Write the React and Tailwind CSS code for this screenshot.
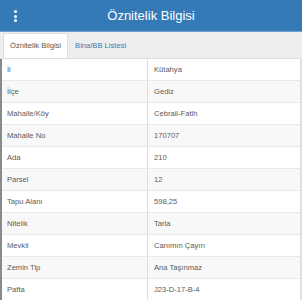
import React from 'react';

const ROWS = [
  ['İl', 'Kütahya'],
  ['İlçe', 'Gediz'],
  ['Mahalle/Köy', 'Cebrail-Fatih'],
  ['Mahalle No', '170707'],
  ['Ada', '210'],
  ['Parsel', '12'],
  ['Tapu Alanı', '598,25'],
  ['Nitelik', 'Tarla'],
  ['Mevkii', 'Canımın Çayırı'],
  ['Zemin Tip', 'Ana Taşınmaz'],
  ['Pafta', 'J23-D-17-B-4'],
];

export default function App() {
  return (
    <div className="w-[302px] h-[300px] overflow-hidden bg-white font-['Liberation_Sans',Arial,sans-serif]">
      {/* Header */}
      <div className="relative h-[32px] bg-[#337ab7] border-b border-[#6a9fd0] flex items-center justify-center">
        <div className="absolute left-[14px] top-[10px] flex flex-col gap-[1.5px]">
          <span className="w-[3px] h-[3px] rounded-full bg-white" />
          <span className="w-[3px] h-[3px] rounded-full bg-white" />
          <span className="w-[3px] h-[3px] rounded-full bg-white" />
        </div>
        <span className="text-white text-[13px] leading-none">Öznitelik Bilgisi</span>
      </div>

      {/* Tabs */}
      <div className="h-[27px] bg-[#eeeeee] border-b border-[#dddddd] flex items-end pl-[3px]">
        <div className="h-[25px] px-[6px] bg-white border border-b-0 border-[#dddddd] rounded-t-[2px] flex items-center text-[7.6px] text-[#555555]">
          Öznitelik Bilgisi
        </div>
        <div className="h-[25px] px-[7px] flex items-center text-[7.6px] text-[#337ab7]">
          Bina/BB Listesi
        </div>
      </div>

      {/* Table */}
      <div className="border-l-2 border-r-2 border-l-[#8a8a8a] border-r-[#e0e0e0]">
        {ROWS.map(([label, value], idx) => (
          <div
            key={label}
            className={`grid grid-cols-[146px_1fr] h-[22px] border-b border-[#e8e8e8] text-[7.6px] text-[#5a5a5a] ${
              idx % 2 === 1 ? 'bg-[#f8f8f8]' : 'bg-white'
            }`}
          >
            <div className="flex items-center pl-[5px] border-r border-[#dddddd]">{label}</div>
            <div className="flex items-center pl-[6px]">{value}</div>
          </div>
        ))}
      </div>
    </div>
  );
}
